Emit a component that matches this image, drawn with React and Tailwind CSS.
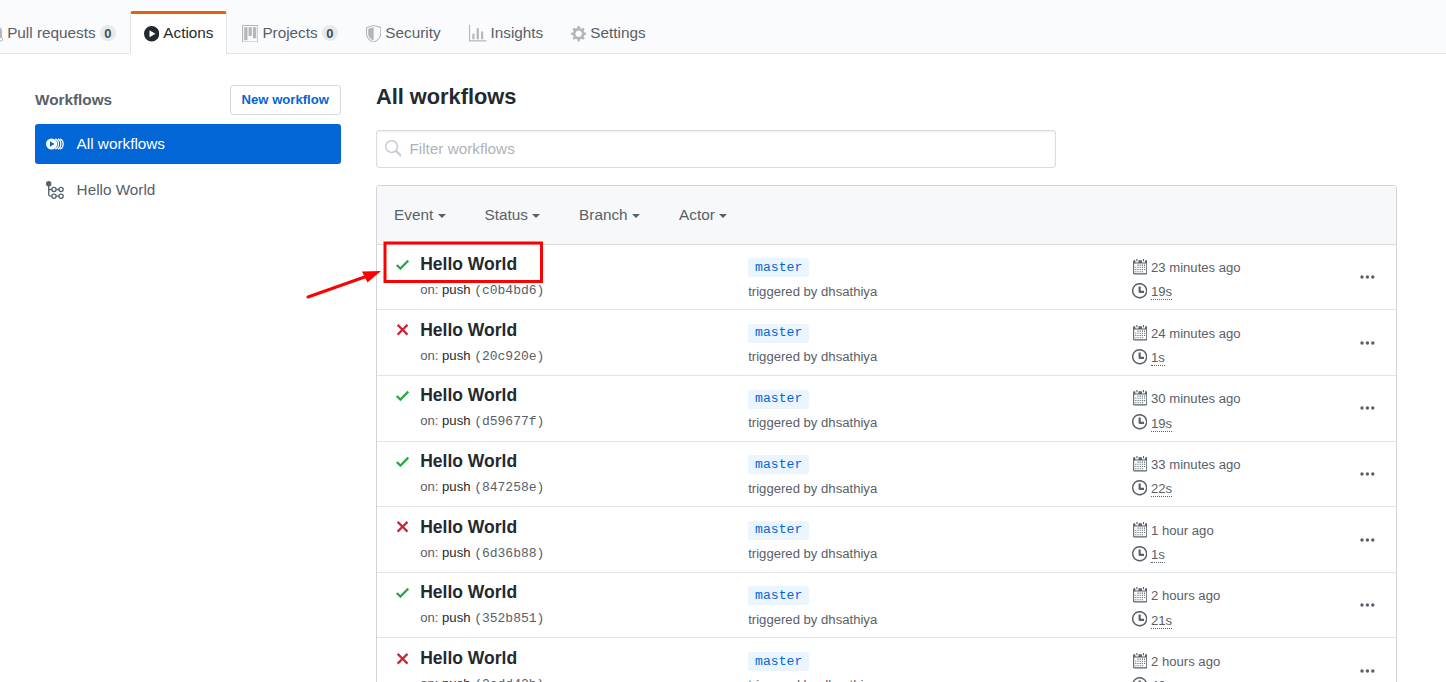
import React from "react";

const PATHS = {
  check: "M12 5l-8 8-4-4 1.5-1.5L4 10l6.5-6.5L12 5z",
  x: "M7.48 8l3.75 3.75-1.48 1.48L6 9.48l-3.75 3.75-1.48-1.48L4.52 8 .77 4.25l1.48-1.48L6 6.52l3.75-3.75 1.48 1.48L7.48 8z",
  clock:
    "M8 8h3v2H7c-.55 0-1-.45-1-1V4h2v4zM7 2.3c3.14 0 5.7 2.56 5.7 5.7s-2.56 5.7-5.7 5.7A5.71 5.71 0 0 1 1.3 8c0-3.14 2.56-5.7 5.7-5.7zM7 1C3.14 1 0 4.14 0 8s3.14 7 7 7 7-3.14 7-7-3.14-7-7-7z",
  calendar:
    "M13 2h-1v1.5c0 .28-.22.5-.5.5h-2c-.28 0-.5-.22-.5-.5V2H6v1.5c0 .28-.22.5-.5.5h-2c-.28 0-.5-.22-.5-.5V2H2c-.55 0-1 .45-1 1v11c0 .55.45 1 1 1h11c.55 0 1-.45 1-1V3c0-.55-.45-1-1-1zm0 12H2V5h11v9zM5 3H4V1h1v2zm6 0h-1V1h1v2zM6 7H5V6h1v1zm2 0H7V6h1v1zm2 0H9V6h1v1zm2 0h-1V6h1v1zM4 9H3V8h1v1zm2 0H5V8h1v1zm2 0H7V8h1v1zm2 0H9V8h1v1zm2 0h-1V8h1v1zm-8 2H3v-1h1v1zm2 0H5v-1h1v1zm2 0H7v-1h1v1zm2 0H9v-1h1v1zm2 0h-1v-1h1v1zm-8 2H3v-1h1v1zm2 0H5v-1h1v1zm2 0H7v-1h1v1zm2 0H9v-1h1v1z",
  gear: "M14 8.77v-1.6l-1.94-.64-.45-1.09.88-1.84-1.13-1.13-1.81.91-1.09-.45-.69-1.92h-1.6l-.63 1.94-1.11.45-1.84-.88-1.13 1.13.91 1.81-.45 1.09L0 7.23v1.59l1.94.64.45 1.09-.88 1.84 1.13 1.13 1.81-.91 1.09.45.69 1.92h1.59l.63-1.94 1.11-.45 1.84.88 1.13-1.13-.92-1.81.47-1.09L14 8.75v.02zM7 11c-1.66 0-3-1.34-3-3s1.34-3 3-3 3 1.34 3 3-1.34 3-3 3z",
  graph: "M16 14v1H0V0h1v14h15zM5 13H3V8h2v5zm4 0H7V3h2v10zm4 0h-2V6h2v7z",
  shield:
    "M0 2l7-2 7 2v6.02C14 12.69 8.69 16 7 16c-1.69 0-7-3.31-7-7.98V2zm1 .75L7 1l6 1.75v5.268C13 12.104 8.449 15 7 15c-1.449 0-6-2.896-6-6.982V2.75zm1 .75L7 2v12c-1.207 0-5-2.482-5-5.985V3.5z",
  project:
    "M10 12h3V2h-3v10zm-4-2h3V2H6v8zm-4 4h3V2H2v12zm-1 1h13V1H1v14zM14 0H1a1 1 0 0 0-1 1v14a1 1 0 0 0 1 1h13a1 1 0 0 0 1-1V1a1 1 0 0 0-1-1z",
  search:
    "M15.7 13.3l-3.81-3.83A5.93 5.93 0 0 0 13 6c0-3.31-2.69-6-6-6S1 2.69 1 6s2.69 6 6 6c1.3 0 2.48-.41 3.47-1.11l3.83 3.81c.19.2.45.3.7.3.25 0 .52-.09.7-.3a.996.996 0 0 0 0-1.41v.01zM7 10.7c-2.59 0-4.7-2.11-4.7-4.7 0-2.59 2.11-4.7 4.7-4.7 2.59 0 4.7 2.11 4.7 4.7 0 2.59-2.11 4.7-4.7 4.7z",
  play: "M14 8A7 7 0 1 1 0 8a7 7 0 0 1 14 0zM5 4.7v6.6L10.5 8 5 4.7z",
  pull: "M11 11.28V5c-.03-.78-.34-1.47-.94-2.06C9.46 2.35 8.78 2.03 8 2H7V0L4 3l3 3V4h1c.27.02.48.11.69.31.21.2.3.42.31.69v6.28A1.993 1.993 0 0 0 10 15a1.993 1.993 0 0 0 1-3.72zm-1 2.92c-.66 0-1.2-.55-1.2-1.2 0-.65.55-1.2 1.2-1.2.65 0 1.2.55 1.2 1.2 0 .65-.55 1.2-1.2 1.2z",
};

function Octicon({ name, w, className = "" }) {
  return (
    <svg
      viewBox={`0 0 ${w} 16`}
      width={w * 1.094}
      height={17.5}
      fill="currentColor"
      fillRule="evenodd"
      className={`shrink-0 ${className}`}
    >
      <path d={PATHS[name]} />
    </svg>
  );
}

function Badge() {
  return (
    <span className="ml-[4px] flex h-[16.5px] w-[16.5px] shrink-0 items-center justify-center rounded-full bg-[#e7e9eb] text-[13px] leading-none font-bold text-[#444d56]">
      0
    </span>
  );
}

function Tab({ icon, w, label, badge, className }) {
  return (
    <a className={`flex h-[42px] shrink-0 items-center pt-[2px] whitespace-nowrap text-[#586069] ${className}`}>
      <Octicon name={icon} w={w} className="mt-[1px] mr-[4px] text-[#b4b7ba]" />
      {label}
      {badge && <Badge />}
    </a>
  );
}

function AllWorkflowsIcon() {
  return (
    <svg width="19" height="14" viewBox="0 0 19 14" className="shrink-0">
      <path fillRule="evenodd" fill="#fff" d="M11.2 7A5.6 5.6 0 1 1 0 7a5.6 5.6 0 0 1 11.2 0zM4 4.200v5.600L8.500 7 4 4.200z" />
      <path
        d="M9.400 1.900c2.100 1 3.100 2.900 3.100 5.100s-1 4.100-3.100 5.100M12 1.900c2 1 2.900 2.900 2.900 5.100s-.9 4.100-2.900 5.100M14.300 1.900c2 1 2.900 2.900 2.900 5.100s-.9 4.100-2.900 5.100"
        fill="none"
        stroke="#fff"
        strokeWidth="1.2"
      />
    </svg>
  );
}

function WorkflowIcon() {
  return (
    <svg width="19" height="19" viewBox="0 0 19 19" fill="none" stroke="#586069" strokeWidth="1.3" className="shrink-0">
      <circle cx="2.700" cy="2.800" r="2.700" fill="#586069" stroke="none" />
      <path d="M2.700 4v9.400c0 1.200.6 1.800 1.800 1.800h1.300M2.700 8.500h3.300M10.200 8.500h2.700M10.200 15.200h2.700" />
      <circle cx="8" cy="8.500" r="2.100" />
      <circle cx="15.100" cy="8.500" r="2.100" />
      <circle cx="8" cy="15.200" r="2.100" />
      <circle cx="15.100" cy="15.200" r="2.100" />
    </svg>
  );
}

function Filter({ label, className }) {
  return (
    <span className={`flex items-center ${className}`}>
      {label}
      <span className="mt-[2px] ml-[4.400px] border-x-[4.300px] border-t-[4.300px] border-x-transparent border-t-[#586069]" />
    </span>
  );
}

const RUNS = [
  { ok: true, sha: "c0b4bd6", ago: "23 minutes ago", time: "19s" },
  { ok: false, sha: "20c920e", ago: "24 minutes ago", time: "1s" },
  { ok: true, sha: "d59677f", ago: "30 minutes ago", time: "19s" },
  { ok: true, sha: "847258e", ago: "33 minutes ago", time: "22s" },
  { ok: false, sha: "6d36b88", ago: "1 hour ago", time: "1s" },
  { ok: true, sha: "352b851", ago: "2 hours ago", time: "21s" },
  { ok: false, sha: "2add42b", ago: "2 hours ago", time: "42s" },
];

function Run({ run }) {
  return (
    <div className="flex h-[65.625px] shrink-0 border-b border-[#e1e4e8] text-[13.125px] text-[#586069]">
      <div className="w-[43.300px] shrink-0 pt-[11.200px] pl-[19px]">
        <Octicon
          name={run.ok ? "check" : "x"}
          w={12}
          className={run.ok ? "text-[#28a745]" : "text-[#cb2431]"}
        />
      </div>
      <div className="w-[328px] shrink-0 pt-[7.500px]">
        <div className="h-[24px] text-[17.500px] leading-[24px] font-bold text-[#24292e]">Hello World</div>
        <div className="mt-[4px] h-[20px] leading-[20px]">
          on: <span className="text-[#24292e]">push</span>{" "}
          <span className="font-['Liberation_Mono',monospace] text-[13px]">({run.sha})</span>
        </div>
      </div>
      <div className="w-[383.500px] shrink-0 pt-[13.700px]">
        <div className="flex h-[19px] w-[61px] items-center justify-center rounded-[3px] bg-[#eaf5ff] font-['Liberation_Mono',monospace] text-[13.125px] text-[#0366d6]">
          master
        </div>
        <div className="mt-[4.300px] h-[20px] leading-[20px]">triggered by dhsathiya</div>
      </div>
      <div className="w-[228px] shrink-0 pt-[13.400px]">
        <div className="flex h-[20px] items-start leading-[20px]">
          <Octicon name="calendar" w={14} className="mr-[4px]" />
          {run.ago}
        </div>
        <div className="mt-[4px] flex h-[20px] items-start">
          <Octicon name="clock" w={14} className="mr-[4px]" />
          <span className="mt-[2.400px] border-b border-dotted border-[#586069] leading-[15px]">{run.time}</span>
        </div>
      </div>
      <div className="flex h-[65px] items-center">
        <svg width="15" height="4" viewBox="0 0 15 4" fill="#586069">
          <circle cx="2" cy="2" r="1.7" />
          <circle cx="7.400" cy="2" r="1.700" />
          <circle cx="12.800" cy="2" r="1.700" />
        </svg>
      </div>
    </div>
  );
}

export default function App() {
  return (
    <div className="relative h-[682px] w-[1446px] overflow-hidden bg-white font-['Liberation_Sans',Arial,sans-serif] text-[15.3px] leading-[22px]">
      <nav className="flex h-[54px] border-b border-[#e1e4e8] bg-[#fafbfc] pt-[11px]">
        <Tab icon="pull" w={12} label="Pull requests" badge className="-ml-[10px] w-[140px]" />
        <a className="flex h-[43px] w-[97px] shrink-0 items-center rounded-t-[3px] border-x border-t-[3px] border-x-[#e1e4e8] border-t-[#e36209] bg-white pb-[2px] pl-[13px] text-[#24292e]">
          <Octicon name="play" w={14} className="mt-[1px] mr-[4px]" />
          Actions
        </a>
        <Tab icon="project" w={15} label="Projects" badge className="ml-[15px] w-[124px]" />
        <Tab icon="shield" w={14} label="Security" className="w-[103px]" />
        <Tab icon="graph" w={16} label="Insights" className="w-[102px]" />
        <Tab icon="gear" w={14} label="Settings" className="" />
      </nav>

      <main className="flex h-[628px]">
        <aside className="w-[375.900px] shrink-0 pt-[31px] pl-[35px]">
          <div className="flex h-[30px] w-[306px] items-center justify-between">
            <h3 className="font-bold text-[#586069]">Workflows</h3>
            <button className="h-[30px] w-[111.500px] rounded-[3px] border border-[#d5d8db] text-[13.125px] font-bold text-[#0366d6]">
              New workflow
            </button>
          </div>
          <a className="mt-[9px] flex h-[40px] w-[306px] items-center gap-[12px] rounded-[3px] bg-[#0366d6] pl-[10.600px] text-white">
            <AllWorkflowsIcon />
            All workflows
          </a>
          <a className="mt-[6px] flex h-[40px] items-center gap-[12px] pl-[10.600px] text-[#586069]">
            <WorkflowIcon />
            Hello World
          </a>
        </aside>

        <section className="w-[1021px] shrink-0">
          <h2 className="mt-[28px] h-[30px] text-[21.800px] leading-[30px] font-bold text-[#24292e]">All workflows</h2>
          <div className="mt-[18.400px] flex h-[37.200px] w-[680px] items-center rounded-[3px] border border-[#d9dce0] pl-[7px] text-[#aeb3b8] shadow-[inset_0_1px_2px_rgba(27,31,35,0.075)]">
            <Octicon name="search" w={16} className="mr-[8px] text-[#c6cbd1]" />
            Filter workflows
          </div>
          <div className="mt-[17.400px] flex h-[520px] flex-col overflow-hidden rounded-t-[3px] border border-[#d1d5da]">
            <div className="flex h-[58.700px] shrink-0 items-center border-b border-[#d9dde2] bg-[#f6f8fa] pl-[17.200px] text-[#586069]">
              <Filter label="Event" className="w-[90.500px]" />
              <Filter label="Status" className="w-[94.500px]" />
              <Filter label="Branch" className="w-[100px]" />
              <Filter label="Actor" className="" />
            </div>
            {RUNS.map((run) => (
              <Run key={run.sha} run={run} />
            ))}
          </div>
        </section>
      </main>

      <svg className="absolute top-[238px] left-[300px]" width="248" height="66" viewBox="300 238 248 66">
        <rect x="385" y="243" width="156.500" height="38.500" fill="none" stroke="#f00" strokeWidth="3" />
        <path d="M308 297L366 276.500" stroke="#f00" strokeWidth="3" strokeLinecap="round" />
        <path d="M381 271L362 271.500L367.500 282.500z" fill="#f00" />
      </svg>
    </div>
  );
}
